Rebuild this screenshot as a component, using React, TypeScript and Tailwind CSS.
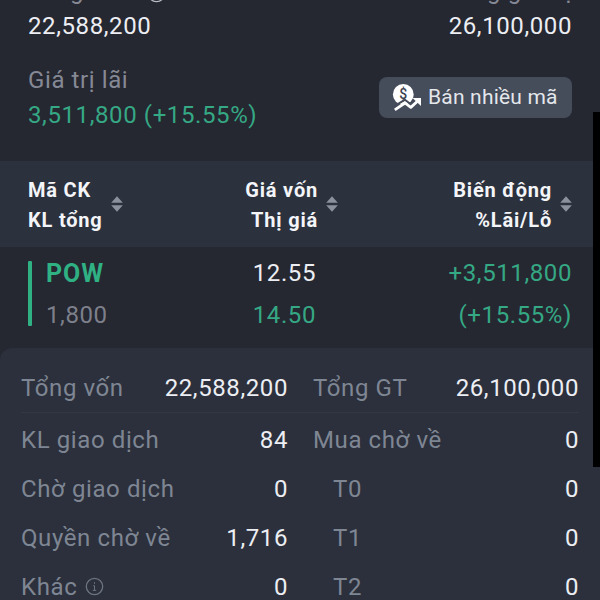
import { clsx } from 'clsx';

interface DetailRow {
  label: string;
  value: string;
  sub?: boolean;
  info?: boolean;
}

const capitalRow: DetailRow = { label: 'Tổng vốn', value: '22,588,200' };
const valueRow: DetailRow = { label: 'Tổng GT', value: '26,100,000' };

const leftRows: DetailRow[] = [
  { label: 'KL giao dịch', value: '84' },
  { label: 'Chờ giao dịch', value: '0' },
  { label: 'Quyền chờ về', value: '1,716' },
  { label: 'Khác', value: '0', info: true },
];

const rightRows: DetailRow[] = [
  { label: 'Mua chờ về', value: '0' },
  { label: 'T0', value: '0', sub: true },
  { label: 'T1', value: '0', sub: true },
  { label: 'T2', value: '0', sub: true },
];

function SortIcon() {
  return (
    <svg width="12" height="16" viewBox="0 0 12 16" className="mb-0.5 shrink-0 fill-[#8b929e]">
      <path d="M6 0.3 11.8 6.7H0.2Z" />
      <path d="M6 15.7 0.2 9.3H11.8Z" />
    </svg>
  );
}

function SellIcon() {
  return (
    <svg width="30" height="28" viewBox="0 0 30 28" fill="none" className="shrink-0">
      <circle cx="11.3" cy="10.4" r="10.4" fill="#fff" />
      <text x="11.3" y="15.2" textAnchor="middle" fontSize="14" fontWeight="500" letterSpacing="0" fill="#3d4350">
        $
      </text>
      <path d="M1 23 12.8 15.8 18.5 20 22 17" stroke="#454c5a" strokeWidth="2" />
      <path d="M2.8 25.8 13 19 18.8 23.4 26 16.8" stroke="#fff" strokeWidth="2.8" strokeLinejoin="round" />
      <path d="M20.5 14H29V22Z" fill="#fff" />
    </svg>
  );
}

function InfoIcon({ className }: { className?: string }) {
  return (
    <svg width="19" height="19" viewBox="0 0 19 19" fill="none" className={clsx('shrink-0', className)}>
      <circle cx="9.5" cy="9.5" r="8.2" stroke="currentColor" strokeWidth="1.3" />
      <path d="M9.5 5.2v1.6M8.2 8.7h1.3v4.6M7.8 13.4h3.4" stroke="currentColor" strokeWidth="1" />
    </svg>
  );
}

function Row({ row }: { row: DetailRow }) {
  return (
    <div className="flex h-[49px] items-center justify-between">
      <span className={clsx('flex items-center gap-2 text-[#7f8693]', row.sub && 'pl-5')}>
        {row.label}
        {row.info && <InfoIcon className="text-[#6d7481]" />}
      </span>
      <span className="text-[#eceef3]">{row.value}</span>
    </div>
  );
}

export default function App() {
  return (
    <div className="relative h-[600px] w-[600px] overflow-hidden bg-[#252731] font-[Roboto,sans-serif] text-[24px] tracking-[0.6px]">
      <section className="flex h-[161px] justify-between px-7">
        <div className="flex flex-col">
          <span className="-mt-[26px] mb-1 flex h-[34px] items-center gap-4 leading-[34px] text-[#858995]">
            Tổng vốn
            <InfoIcon className="mt-1 text-[#b9bdc6]" />
          </span>
          <span className="h-[28px] leading-[29px] text-[#eceef3]">22,588,200</span>
          <span className="mt-[23px] h-[34px] leading-[34px] text-[#858995]">Giá trị lãi</span>
          <span className="h-[36px] leading-[36px] text-[#35a884]">3,511,800 (+15.55%)</span>
        </div>
        <div className="flex flex-col items-end">
          <span className="-mt-[26px] mb-1 h-[34px] leading-[34px] text-[#858995]">Tổng giá trị</span>
          <span className="h-[28px] leading-[29px] text-[#eceef3]">26,100,000</span>
          <button className="mt-[37px] flex h-[41px] w-[193px] items-center gap-1.5 rounded-lg bg-[#454c5a] pl-[13px] text-[21px] tracking-[0.2px] text-[#e4e7ec]">
            <SellIcon />
            <span className="whitespace-nowrap">Bán nhiều mã</span>
          </button>
        </div>
      </section>

      <section className="flex h-[86px] items-center justify-between bg-[#2b313d] px-7 pt-px text-[20px] font-bold leading-[30px] tracking-[0.8px] text-[#f4f5f8]">
        <div className="flex w-[180px] items-center gap-2">
          <div>Mã CK<br />KL tổng</div>
          <SortIcon />
        </div>
        <div className="flex w-[158px] items-center justify-end gap-2 pr-[41px] text-right">
          <div>Giá vốn<br />Thị giá</div>
          <SortIcon />
        </div>
        <div className="flex w-[180px] items-center justify-end gap-2 text-right">
          <div>Biến động<br />%Lãi/Lỗ</div>
          <SortIcon />
        </div>
      </section>

      <section className="flex h-[101px] justify-between px-7 pt-[5px] leading-[42px]">
        <div className="flex w-[180px]">
          <div className="mt-[9px] h-[65px] w-1 rounded-[1px] bg-[#2fb183]" />
          <div className="ml-3.5">
            <div className="h-[42px] pt-px text-[25px] font-bold tracking-[1px] text-[#2fb183]">POW</div>
            <div className="text-[#7d808b]">1,800</div>
          </div>
        </div>
        <div className="w-[152px] pr-[60px] text-right">
          <div className="text-[#eceef3]">12.55</div>
          <div className="text-[#35a884]">14.50</div>
        </div>
        <div className="w-[180px] text-right text-[#35a884]">
          <div>+3,511,800</div>
          <div>(+15.55%)</div>
        </div>
      </section>

      <section className="h-[252px] rounded-tl-xl bg-[#2b303c] px-[21px] pt-[15px]">
        <div className="flex h-[50px] gap-[25px] border-b border-[#333743]">
          <div className="w-[267px]"><Row row={capitalRow} /></div>
          <div className="flex-1"><Row row={valueRow} /></div>
        </div>
        <div className="flex gap-[25px] pt-[2px]">
          <div className="w-[267px]">
            {leftRows.map((row) => <Row key={row.label} row={row} />)}
          </div>
          <div className="flex-1">
            {rightRows.map((row) => <Row key={row.label} row={row} />)}
          </div>
        </div>
      </section>

      {/* scrollbar */}
      <div className="absolute right-0 top-[112px] h-[355px] w-[7px] bg-black" />
    </div>
  );
}
